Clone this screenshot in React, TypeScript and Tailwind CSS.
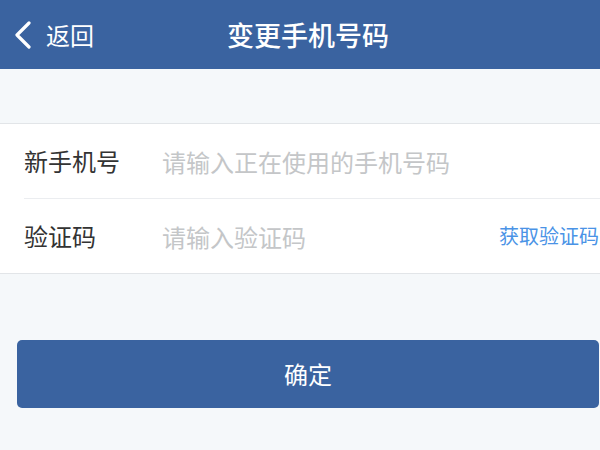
import React from 'react'

const font = { fontFamily: '"Noto Sans CJK SC", "Noto Sans", sans-serif' }

function BackIcon() {
  return (
    <svg width="20" height="28" viewBox="0 0 20 28" fill="none">
      <path d="M16 2 L4 14 L16 26" stroke="white" strokeWidth="3.2" strokeLinecap="round" strokeLinejoin="round" />
    </svg>
  )
}

function Row({ label, placeholder, action }: { label: string; placeholder: string; action?: string }) {
  return (
    <div className="flex items-center h-[74px] pl-6 pr-[17px]">
      <span className="w-[138px] text-[24px] text-[#333333] leading-none">{label}</span>
      <input
        className="flex-1 min-w-0 bg-transparent outline-none text-[24px] leading-none text-[#333] placeholder:text-[#c4c6c8]"
        placeholder={placeholder}
        style={font}
      />
      {action && <button className="text-[20px] text-[#4a93e6] leading-none">{action}</button>}
    </div>
  )
}

export default function App() {
  return (
    <div className="w-[600px] h-[450px] overflow-hidden bg-[#f5f8fa]" style={font}>
      <div className="w-[616px]">
        <div className="h-[69px] bg-[#3a63a0] flex items-center relative">
          <div className="flex items-center pl-[13px] gap-[13px]">
            <BackIcon />
            <span className="text-white text-[24px] leading-none">返回</span>
          </div>
          <div className="absolute inset-0 flex items-center justify-center pointer-events-none">
            <span className="text-white text-[27px] font-medium leading-none">变更手机号码</span>
          </div>
        </div>
        <div className="h-[54px]" />
        <div className="bg-white border-y border-[#e2e5e8]">
          <Row label="新手机号" placeholder="请输入正在使用的手机号码" />
          <div className="ml-6 h-px bg-[#ebedf0]" />
          <Row label="验证码" placeholder="请输入验证码" action="获取验证码" />
        </div>
        <div className="px-[17px] pt-[66px]">
          <button className="w-full h-[68px] rounded-[5px] bg-[#3a63a0] text-white text-[24px]" style={font}>
            确定
          </button>
        </div>
      </div>
    </div>
  )
}
